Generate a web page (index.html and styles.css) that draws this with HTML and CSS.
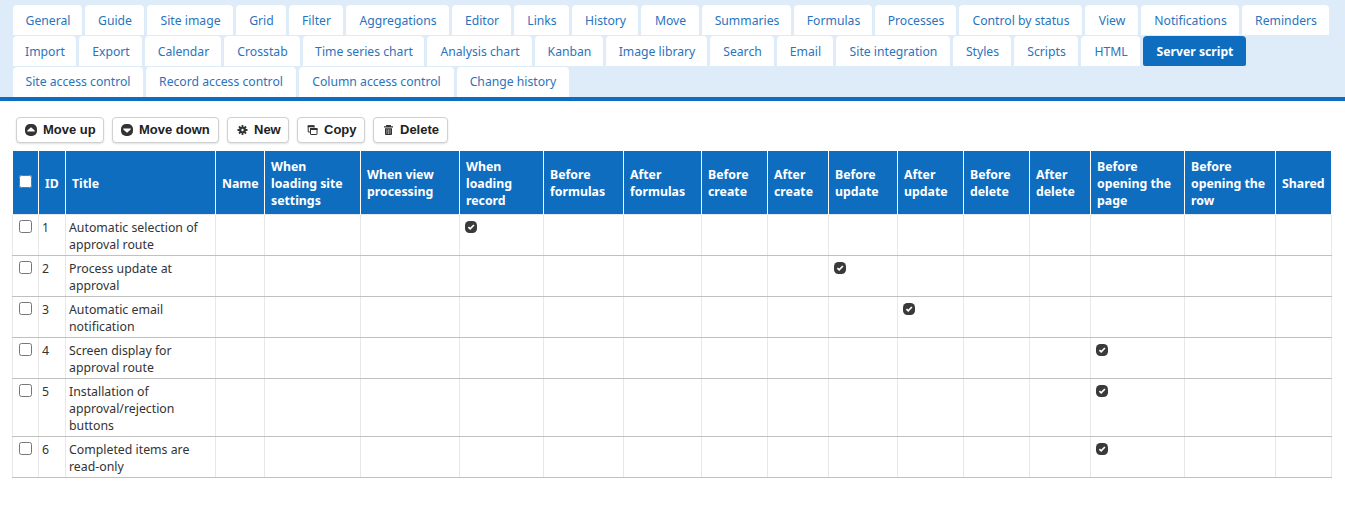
FILE: index.html
```html
<!DOCTYPE html>
<html lang="en">

<head>
    <meta charset="UTF-8">
    <meta name="viewport" content="width=device-width, initial-scale=1.0">
    <title>Server script</title>

    <link rel="stylesheet" href="styles.css">
</head>

<body>

    <svg class="sprite" aria-hidden="true">
        <symbol id="icon-up" viewBox="0 0 12 12">
            <rect width="12" height="12" rx="5" fill="#333" />
            <path d="M2.3 7.4V6.6L6 3.2l3.7 3.4v.8z" fill="#fff" />
        </symbol>
        <symbol id="icon-down" viewBox="0 0 12 12">
            <rect width="12" height="12" rx="5" fill="#333" />
            <path d="M2.3 4.6v.8L6 8.8l3.7-3.4v-.8z" fill="#fff" />
        </symbol>
        <symbol id="icon-gear" viewBox="0 0 12 12">
            <path d="M6.5 1v10M1.5 6h10M3 2.5l7 7M10 2.5l-7 7" stroke="#333" stroke-width="1.8" />
            <circle cx="6.5" cy="6" r="3.3" fill="#333" />
            <circle cx="6.5" cy="6" r="1.2" fill="#fff" />
        </symbol>
        <symbol id="icon-copy" viewBox="0 0 12 12">
            <path d="M4 8H2.2V2H8V3.5" fill="none" stroke="#333" />
            <rect x="4.5" y="4.5" width="6.5" height="6" rx=".5" fill="#fff" stroke="#333" />
            <path d="M4 5h7.5M1.7 2.3h6.8" stroke="#333" stroke-width="1.9" />
        </symbol>
        <symbol id="icon-trash" viewBox="0 0 12 12">
            <path d="M2 2.9h9M4.8 2.2V1.6h3.4v.6" fill="none" stroke="#333" stroke-width="1.4" />
            <path d="M3 4.3h7v6a.8.8 0 0 1-.8.8H3.8a.8.8 0 0 1-.8-.8z" fill="#333" />
            <path d="M4.9 5.3v4.6M6.5 5.3v4.6M8.1 5.3v4.6" stroke="#fff" stroke-width=".5" />
        </symbol>
        <symbol id="icon-check" viewBox="0 0 12 12">
            <rect width="12" height="12" rx="4.4" fill="#3a3a3a" />
            <path d="M3.4 6.1 5.2 7.9 8.9 4" fill="none" stroke="#fff" stroke-width="1.7" />
        </symbol>
    </svg>

    <nav class="tabs">
        <ul class="tabs__row tabs__row--first">
            <li class="tab">General</li>
            <li class="tab">Guide</li>
            <li class="tab">Site image</li>
            <li class="tab">Grid</li>
            <li class="tab">Filter</li>
            <li class="tab">Aggregations</li>
            <li class="tab">Editor</li>
            <li class="tab">Links</li>
            <li class="tab">History</li>
            <li class="tab">Move</li>
            <li class="tab">Summaries</li>
            <li class="tab">Formulas</li>
            <li class="tab">Processes</li>
            <li class="tab">Control by status</li>
            <li class="tab">View</li>
            <li class="tab">Notifications</li>
            <li class="tab">Reminders</li>
        </ul>
        <ul class="tabs__row tabs__row--second">
            <li class="tab">Import</li>
            <li class="tab">Export</li>
            <li class="tab">Calendar</li>
            <li class="tab">Crosstab</li>
            <li class="tab">Time series chart</li>
            <li class="tab">Analysis chart</li>
            <li class="tab">Kanban</li>
            <li class="tab">Image library</li>
            <li class="tab">Search</li>
            <li class="tab">Email</li>
            <li class="tab">Site integration</li>
            <li class="tab">Styles</li>
            <li class="tab">Scripts</li>
            <li class="tab">HTML</li>
            <li class="tab tab--active">Server script</li>
        </ul>
        <ul class="tabs__row tabs__row--third">
            <li class="tab">Site access control</li>
            <li class="tab">Record access control</li>
            <li class="tab">Column access control</li>
            <li class="tab">Change history</li>
        </ul>
    </nav>

    <main class="panel">
        <div class="commands">
            <button class="button button--up"><svg class="button__icon"><use href="#icon-up" /></svg>Move up</button>
            <button class="button button--down"><svg class="button__icon"><use href="#icon-down" /></svg>Move down</button>
            <button class="button button--new"><svg class="button__icon"><use href="#icon-gear" /></svg>New</button>
            <button class="button button--copy"><svg class="button__icon"><use href="#icon-copy" /></svg>Copy</button>
            <button class="button button--delete"><svg class="button__icon"><use href="#icon-trash" /></svg>Delete</button>
        </div>

        <table class="grid">
            <thead>
                <tr>
                    <th class="grid__select"><input type="checkbox" class="checkbox"></th>
                    <th class="grid__id">ID</th>
                    <th class="grid__title">Title</th>
                    <th class="grid__name">Name</th>
                    <th class="grid__site">When loading site settings</th>
                    <th class="grid__view">When view processing</th>
                    <th class="grid__record">When loading record</th>
                    <th class="grid__before-formulas">Before formulas</th>
                    <th class="grid__after-formulas">After formulas</th>
                    <th class="grid__before-create">Before create</th>
                    <th class="grid__after-create">After create</th>
                    <th class="grid__before-update">Before update</th>
                    <th class="grid__after-update">After update</th>
                    <th class="grid__before-delete">Before delete</th>
                    <th class="grid__after-delete">After delete</th>
                    <th class="grid__page">Before opening the page</th>
                    <th class="grid__row">Before opening the row</th>
                    <th class="grid__shared">Shared</th>
                </tr>
            </thead>
            <tbody>
                <tr>
                    <td><input type="checkbox" class="checkbox"></td>
                    <td>1</td>
                    <td>Automatic selection of approval route</td>
                    <td></td><td></td><td></td>
                    <td><svg class="check"><use href="#icon-check" /></svg></td>
                    <td></td><td></td><td></td><td></td><td></td><td></td><td></td><td></td><td></td><td></td><td></td>
                </tr>
                <tr>
                    <td><input type="checkbox" class="checkbox"></td>
                    <td>2</td>
                    <td>Process update at approval</td>
                    <td></td><td></td><td></td><td></td><td></td><td></td><td></td><td></td>
                    <td><svg class="check"><use href="#icon-check" /></svg></td>
                    <td></td><td></td><td></td><td></td><td></td><td></td>
                </tr>
                <tr>
                    <td><input type="checkbox" class="checkbox"></td>
                    <td>3</td>
                    <td>Automatic email notification</td>
                    <td></td><td></td><td></td><td></td><td></td><td></td><td></td><td></td><td></td>
                    <td><svg class="check"><use href="#icon-check" /></svg></td>
                    <td></td><td></td><td></td><td></td><td></td>
                </tr>
                <tr>
                    <td><input type="checkbox" class="checkbox"></td>
                    <td>4</td>
                    <td>Screen display for approval route</td>
                    <td></td><td></td><td></td><td></td><td></td><td></td><td></td><td></td><td></td><td></td><td></td><td></td>
                    <td><svg class="check"><use href="#icon-check" /></svg></td>
                    <td></td><td></td>
                </tr>
                <tr>
                    <td><input type="checkbox" class="checkbox"></td>
                    <td>5</td>
                    <td>Installation of approval/rejection buttons</td>
                    <td></td><td></td><td></td><td></td><td></td><td></td><td></td><td></td><td></td><td></td><td></td><td></td>
                    <td><svg class="check"><use href="#icon-check" /></svg></td>
                    <td></td><td></td>
                </tr>
                <tr>
                    <td><input type="checkbox" class="checkbox"></td>
                    <td>6</td>
                    <td>Completed items are<br>read-only</td>
                    <td></td><td></td><td></td><td></td><td></td><td></td><td></td><td></td><td></td><td></td><td></td><td></td>
                    <td><svg class="check"><use href="#icon-check" /></svg></td>
                    <td></td><td></td>
                </tr>
            </tbody>
        </table>
    </main>

</body>

</html>
```
FILE: styles.css
```css
* {
    box-sizing: border-box;
}

body {
    margin: 0;
    background: #fff;
    color: #333;
    font-family: "Noto Sans", "Open Sans", sans-serif;
    font-size: 12.3px;
    line-height: 17px;
}

.sprite {
    display: none;
}

/* tabs */

.tabs {
    height: 101px;
    padding: 5px 0 0 12px;
    border-bottom: 4px solid #0f6dbf;
    background: #deebf8;
}

.tabs__row {
    display: grid;
    height: 30px;
    margin: 0 0 1px;
    padding: 0;
    list-style-type: none;
}

.tabs__row--first {
    grid-template-columns: 73px 62px 89px 53px 57px 106px 62px 58px 69px 61px 92px 81px 84px 126px 56px 101px 90px;
}

.tabs__row--second {
    grid-template-columns: 67px 66px 79px 79px 124px 108px 71px 104px 67px 59px 117px 61px 67px 62px 106px;
}

.tabs__row--third {
    grid-template-columns: 134px 153px 158px 115px;
}

.tab {
    height: 30px;
    margin-right: 3px;
    padding: 1px 0 0 1px;
    border-radius: 4px 4px 0 0;
    background: #fff;
    color: #2a73bd;
    font-size: 12.2px;
    line-height: 30px;
    text-align: center;
    white-space: nowrap;
}

.tabs__row .tab:first-child {
    margin-left: 1px;
}

.tabs__row--third .tab {
    padding: 0;
}

.tab--active {
    border-radius: 4px 4px 2px 2px;
    background: #0f6dbf;
    color: #fff;
    font-weight: 700;
}

/* commands */

.panel {
    padding: 16px 12px;
}

.commands {
    display: flex;
    gap: 8px;
    margin: 0 0 8px 4px;
}

.button {
    display: flex;
    align-items: center;
    gap: 6px;
    height: 26px;
    padding: 0 7px 1px 8px;
    border: 1px solid #d0d0d0;
    border-radius: 4px;
    background: #fff;
    box-shadow: 0 1px 2px rgba(0, 0, 0, .12);
    color: #222;
    font-family: "Liberation Sans", Arial, sans-serif;
    font-size: 13px;
    font-weight: 700;
    white-space: nowrap;
}

.button--up {
    width: 88px;
}

.button--down {
    width: 107px;
}

.button--new {
    width: 62px;
}

.button--copy {
    width: 68px;
}

.button--delete {
    width: 75px;
}

.button__icon {
    flex: none;
    width: 12px;
    height: 12px;
}

/* grid */

.grid {
    width: 1319px;
    border-collapse: collapse;
    table-layout: fixed;
}

.grid th {
    height: 63px;
    padding: 2px 0 0 6px;
    border-left: 1px solid #fff;
    border-right: 1px solid #fff;
    background: #0f6dbf;
    color: #fff;
    font-weight: 700;
    text-align: left;
}

.grid td {
    height: 41px;
    padding: 4px 3px 2px;
    border: 1px solid #e8e8e8;
    border-bottom-color: #c0c0c0;
    vertical-align: top;
}

.grid__select { width: 26px; }
.grid__id { width: 27px; }
.grid__title { width: 150px; }
.grid__name { width: 49px; }
.grid__site { width: 96px; }
.grid__view { width: 99px; }
.grid__record { width: 84px; }
.grid__before-formulas { width: 80px; }
.grid__after-formulas { width: 78px; }
.grid__before-create { width: 66px; }
.grid__after-create { width: 61px; }
.grid__before-update { width: 69px; }
.grid__after-update { width: 66px; }
.grid__before-delete { width: 66px; }
.grid__after-delete { width: 61px; }
.grid__page { width: 94px; }
.grid__row { width: 91px; }
.grid__shared { width: 56px; }

.grid .grid__site {
    padding-right: 12px;
}

.checkbox {
    display: block;
    width: 13px;
    height: 13px;
    margin: 1px 0 0 3px;
}

.grid th .checkbox {
    margin: -3px 0 0;
}

.check {
    display: block;
    width: 12px;
    height: 12px;
    margin: 2px 0 0 2px;
}
```
